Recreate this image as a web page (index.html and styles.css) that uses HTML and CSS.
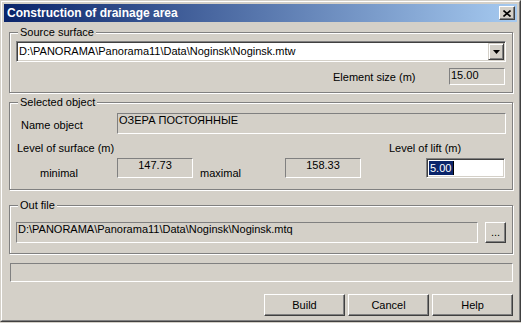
FILE: index.html
```html
<!DOCTYPE html>
<html>
<head>
<meta charset="utf-8">
<title>Construction of drainage area</title>
<link rel="stylesheet" href="styles.css">
</head>
<body>
<div class="window">
  <div class="frame">
    <div class="titlebar">
      <span class="title">Construction of drainage area</span>
      <span class="close"><svg width="8" height="7" viewBox="0 0 8 7"><path d="M0.5 0.5 L7.5 6.5 M7.5 0.5 L0.5 6.5" stroke="#000" stroke-width="1.6" fill="none"/></svg></span>
    </div>

    <fieldset class="group g1">
      <legend>Source surface</legend>
      <div class="combo">
        <span class="combo-text">D:\PANORAMA\Panorama11\Data\Noginsk\Noginsk.mtw</span>
        <span class="combo-btn"><svg width="7" height="4" viewBox="0 0 7 4"><polygon points="0,0 7,0 3.5,4" fill="#000"/></svg></span>
      </div>
      <div class="row elem-row">
        <span class="lbl elem-lbl">Element size (m)</span>
        <span class="static f-elem">15.00</span>
      </div>
    </fieldset>

    <fieldset class="group g2">
      <legend>Selected object</legend>
      <div class="row name-row">
        <span class="lbl name-lbl">Name object</span>
        <span class="static f-name">ОЗЕРА ПОСТОЯННЫЕ</span>
      </div>
      <div class="row level-row">
        <span class="lbl surf-lbl">Level of surface (m)</span>
        <span class="lbl lift-lbl">Level of lift (m)</span>
      </div>
      <div class="row val-row">
        <span class="lbl min-lbl">minimal</span>
        <span class="static num">147.73</span>
        <span class="lbl max-lbl">maximal</span>
        <span class="static num">158.33</span>
        <span class="edit"><span class="sel">5.00</span><span class="caret"></span></span>
      </div>
    </fieldset>

    <fieldset class="group g3">
      <legend>Out file</legend>
      <div class="row out-row">
        <span class="static f-out">D:\PANORAMA\Panorama11\Data\Noginsk\Noginsk.mtq</span>
        <span class="btn dots">...</span>
      </div>
    </fieldset>

    <div class="progress"></div>

    <div class="buttons">
      <span class="btn action">Build</span>
      <span class="btn action">Cancel</span>
      <span class="btn action">Help</span>
    </div>
  </div>
</div>
</body>
</html>
```
FILE: styles.css
```css
* { box-sizing: border-box; }
html, body { margin: 0; padding: 0; background: #d4d0c8; }
body {
  font-family: "Liberation Sans", Arial, sans-serif;
  font-size: 11px;
  line-height: 13px;
  color: #000;
}
.window {
  width: 521px;
  height: 322px;
  border: 1px solid;
  border-color: #d4d0c8 #404040 #404040 #d4d0c8;
  background: #d4d0c8;
}
.frame {
  height: 100%;
  border: 1px solid;
  border-color: #fff #808080 #808080 #fff;
  padding: 2px;
  display: flex;
  flex-direction: column;
}
.titlebar {
  flex: none;
  height: 18px;
  display: flex;
  align-items: center;
  padding: 0 2px 0 3px;
  background: linear-gradient(to right, #0a246a, #a6caf0);
}
.title {
  flex: 1;
  color: #fff;
  font-weight: bold;
  font-size: 12px;
}
.close {
  width: 16px;
  height: 14px;
  display: flex;
  align-items: center;
  justify-content: center;
  background: #d4d0c8;
  border: 1px solid;
  border-color: #fff #404040 #404040 #fff;
  box-shadow: inset -1px -1px 0 #808080;
}
.group {
  flex: none;
  min-width: 0;
  padding: 0;
  border: 1px solid #808080;
  box-shadow: inset 1px 1px 0 #fff, 1px 1px 0 #fff;
}
.group legend {
  margin-left: 8px;
  padding: 0 2px;
  line-height: 13px;
  background: #d4d0c8;
}
.g1 { margin: 4px 4px 0 5px; padding: 2px 0 7px; }
.g2 { margin: 3px 4px 0 5px; padding: 4px 0 11px; }
.g3 { margin: 9px 4px 0 5px; padding: 10px 0 10px; }
.row { display: flex; }
.static {
  border: 1px solid;
  border-color: #808080 #fff #fff #808080;
  padding: 0 1px;
  white-space: nowrap;
  overflow: hidden;
}
.combo {
  height: 21px;
  margin: 0 6px 0 6px;
  display: flex;
  align-items: center;
  background: #fff;
  border: 1px solid;
  border-color: #808080 #fff #fff #808080;
  box-shadow: inset 1px 1px 0 #404040, inset -1px -1px 0 #d4d0c8;
  padding: 1px 1px 1px 2px;
}
.combo-text { flex: 1; white-space: nowrap; }
.combo-btn {
  width: 16px;
  height: 17px;
  display: flex;
  align-items: center;
  justify-content: center;
  background: #d4d0c8;
  border: 1px solid;
  border-color: #d4d0c8 #404040 #404040 #d4d0c8;
  box-shadow: inset 1px 1px 0 #fff, inset -1px -1px 0 #808080;
}
.elem-row { margin-top: 6px; height: 17px; }
.elem-lbl { margin-left: 323px; width: 116px; padding-top: 3px; }
.f-elem { width: 56px; }
.name-row { height: 21px; }
.name-lbl { margin-left: 11px; width: 96px; padding-top: 6px; }
.f-name { flex: 1; margin-right: 6px; }
.level-row { margin-top: 8px; height: 13px; }
.surf-lbl { margin-left: 7px; width: 372px; }
.val-row { margin-top: 3px; height: 20px; }
.min-lbl { margin-left: 30px; width: 77px; padding-top: 9px; }
.num { width: 76px; text-align: center; }
.max-lbl { margin-left: 7px; width: 85px; padding-top: 9px; }
.edit {
  width: 79px;
  margin-left: 65px;
  display: flex;
  align-items: center;
  background: #fff;
  border: 1px solid;
  border-color: #808080 #fff #fff #808080;
  box-shadow: inset 1px 1px 0 #404040, inset -1px -1px 0 #d4d0c8;
  padding: 0 1px 0 2px;
}
.sel {
  background: #0a246a;
  color: #fff;
  line-height: 14px;
  padding: 0 2px 0 1px;
}
.caret { width: 1px; height: 14px; background: #000; }
.out-row { height: 21px; }
.f-out { width: 462px; margin-left: 6px; }
.btn {
  display: flex;
  align-items: center;
  justify-content: center;
  background: #d4d0c8;
  border: 1px solid;
  border-color: #fff #404040 #404040 #fff;
  box-shadow: inset -1px -1px 0 #808080;
}
.dots { width: 21px; margin-left: 7px; }
.progress {
  flex: none;
  height: 19px;
  margin: 9px 4px 0 6px;
  border: 1px solid;
  border-color: #808080 #fff #fff #808080;
}
.buttons {
  flex: none;
  display: flex;
  justify-content: flex-end;
  gap: 3px;
  margin: 12px 4px 0 0;
}
.action { width: 81px; height: 22px; }
```
